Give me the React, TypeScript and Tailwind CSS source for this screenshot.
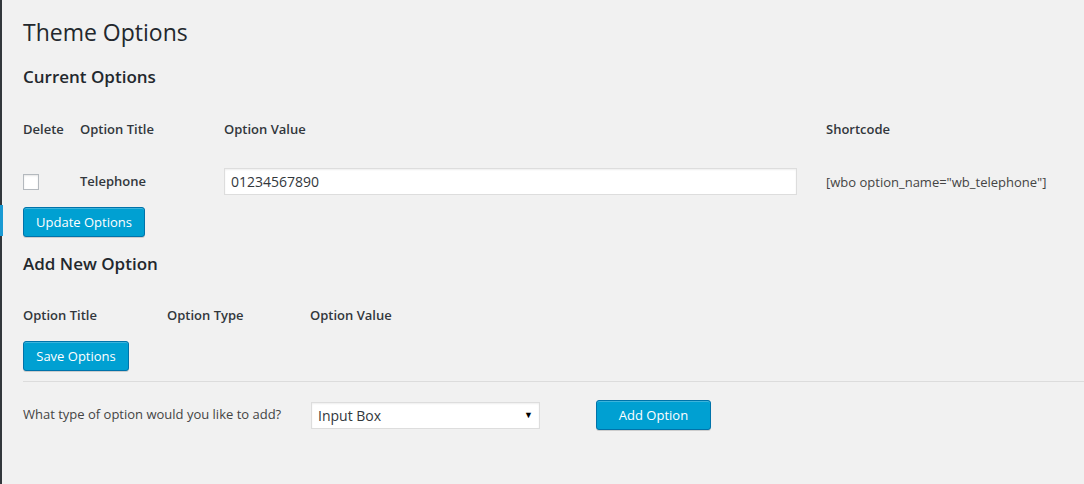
import React from "react";

const font = { fontFamily: '"Open Sans", "Noto Sans", sans-serif' };

const BlueButton = ({ label, width }: { label: string; width: string }) => (
  <button
    type="button"
    className={`${width} h-[30px] rounded-[3px] border border-[#0073aa] bg-[#00a0d2] text-[13px] leading-[28px] text-white shadow-[inset_0_1px_0_rgba(120,200,230,0.5),0_1px_0_rgba(0,0,0,0.15)]`}
  >
    {label}
  </button>
);

export default function App() {
  return (
    <div className="flex min-h-[484px] w-[1084px] bg-[#f1f1f1] text-[#444]" style={font}>
      {/* admin menu edge */}
      <div className="flex w-[2px] shrink-0 flex-col bg-[#32373c]">
        <div className="h-[205px]" />
        <div className="h-[31px] w-[3px] bg-[#1a9ad3]" />
      </div>

      <div className="flex flex-1 flex-col pl-[21px]">
        <h1 className="mt-[18px] text-[23px] leading-[29px] font-normal text-[#23282d]">Theme Options</h1>

        <h2 className="mt-[18px] text-[17px] leading-[23px] font-semibold text-[#23282d]">Current Options</h2>

        <div className="mt-[31px] grid grid-cols-[57px_144px_602px_1fr] text-[13px] leading-[20px] font-semibold text-[#32373c]">
          <div>Delete</div>
          <div>Option Title</div>
          <div>Option Value</div>
          <div>Shortcode</div>
        </div>

        <div className="mt-[29px] grid h-[27px] grid-cols-[57px_144px_602px_1fr] items-center">
          <div>
            <div className="mt-[1px] h-[16px] w-[16px] border border-[#b4b9be] bg-white shadow-[inset_0_1px_2px_rgba(0,0,0,0.1)]" />
          </div>
          <div className="text-[13px] font-semibold text-[#32373c]">Telephone</div>
          <div className="pr-[29px]">
            <div className="flex h-[27px] items-center border border-[#ddd] bg-white pl-[6px] text-[14px] text-[#32373c] shadow-[inset_0_1px_2px_rgba(0,0,0,0.07)]">
              01234567890
            </div>
          </div>
          <div className="mt-[2px] text-[13px] text-[#444]">[wbo option_name="wb_telephone"]</div>
        </div>

        <div className="mt-[12px]">
          <BlueButton label="Update Options" width="w-[122px]" />
        </div>

        <h2 className="mt-[15px] text-[17px] leading-[23px] font-semibold text-[#23282d]">Add New Option</h2>

        <div className="mt-[30px] grid grid-cols-[144px_143px_1fr] text-[13px] leading-[20px] font-semibold text-[#32373c]">
          <div>Option Title</div>
          <div>Option Type</div>
          <div>Option Value</div>
        </div>

        <div className="mt-[16px]">
          <BlueButton label="Save Options" width="w-[106px]" />
        </div>

        <div className="mt-[10px] h-px bg-[#dcdcdc]" />

        <div className="mt-[18px] flex h-[30px] items-center">
          <div className="w-[288px] text-[13px] text-[#444]">What type of option would you like to add?</div>
          <div className="flex h-[27px] w-[229px] items-center justify-between border border-[#ddd] bg-white pl-[6px] pr-[6px] text-[14px] text-[#32373c] shadow-[inset_0_1px_2px_rgba(0,0,0,0.07)]">
            <span>Input Box</span>
            <span className="text-[9px] text-black">▼</span>
          </div>
          <div className="ml-[56px]">
            <BlueButton label="Add Option" width="w-[115px]" />
          </div>
        </div>
      </div>
    </div>
  );
}
